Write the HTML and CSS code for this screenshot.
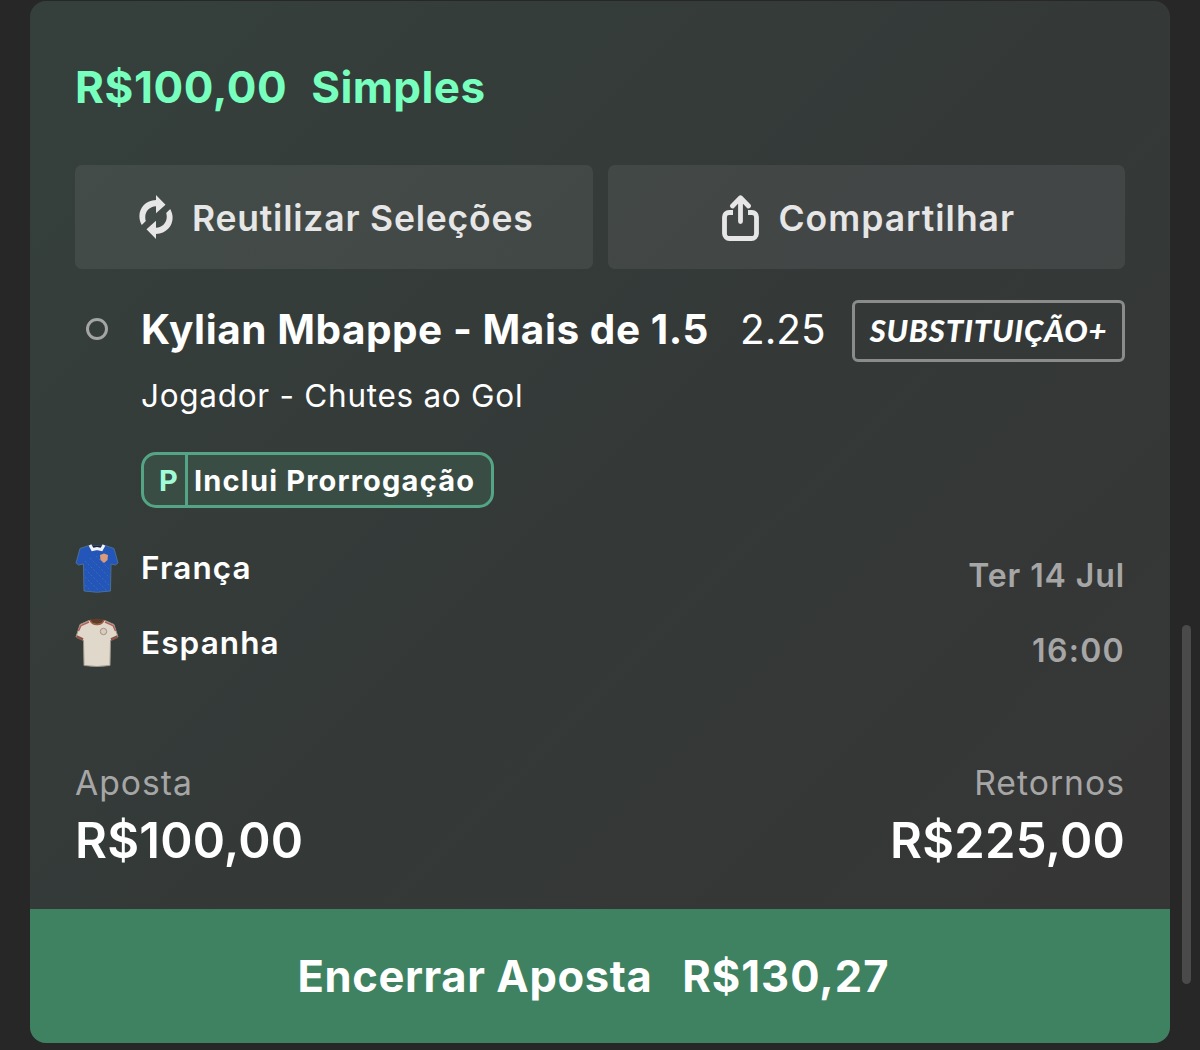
FILE: index.html
```
<!DOCTYPE html>
<html lang="pt-BR">
<head>
    <meta charset="utf-8">
    <title>Minhas Apostas</title>
    <link rel="stylesheet" href="styles.css">
</head>
<body>
    <div class="bet-card">
        <div class="bet-body">
            <div class="bet-header">
                <span class="header-stake">R$100,00</span>
                <span class="header-type">Simples</span>
            </div>

            <div class="actions">
                <button type="button" class="action">
                    <svg class="icon-reuse" width="34" height="44" viewBox="0 0 34 44">
                        <path d="M17 0 L26.500 9.700 L17 18.300 V11.200 C9.500 11.500 4.500 18 6.800 26 L2.800 30 C-3.500 19 3 5.500 17 5 Z"/>
                        <path d="M17 44 L7.500 34.300 L17 25.700 V32.800 C24.500 32.500 29.500 26 27.200 18 L31.200 14 C37.500 25 31 38.500 17 39 Z"/>
                    </svg>
                    <span class="reuse-label">Reutilizar Seleções</span>
                </button>
                <button type="button" class="action">
                    <svg class="icon-share" width="37" height="46" viewBox="0 0 37 46">
                        <path stroke-linecap="butt" d="M11 17.500 H7 a4.500 4.500 0 0 0 -4.500 4.500 V38.500 a5 5 0 0 0 5 5 H29.500 a5 5 0 0 0 5 -5 V22 a4.500 4.500 0 0 0 -4.500 -4.500 H26"/>
                        <path stroke-linecap="round" d="M18.500 26.500 V4 M10.500 11 L18.500 2.700 L26.500 11"/>
                    </svg>
                    <span class="share-label">Compartilhar</span>
                </button>
            </div>

            <div class="selection">
                <span class="status-dot"></span>
                <span class="selection-name">Kylian Mbappe - Mais de 1.5</span>
                <span class="odds">2.25</span>
                <span class="sub-badge">SUBSTITUIÇÃO+</span>
            </div>
            <div class="market">Jogador - Chutes ao Gol</div>
            <div class="pill">
                <span class="pill-letter">P</span>
                <span class="pill-text">Inclui Prorrogação</span>
            </div>

            <div class="fixture">
                <div class="team">
                    <svg class="shirt" width="44" height="50" viewBox="0 0 44 50">
                        <path fill="#2356b8" stroke="#4a6f96" d="M14 2.500 L5 5.500 L1 20 L3.500 22 L8.500 21 L9 48 Q22 50.500 35.500 48 L36 21 L40.500 22 L43 20 L39 5.500 L30 2.500 Z"/>
                        <path fill="none" stroke="#3b69b5" stroke-dasharray="2 2" d="M10 18 L35 43 M10 26 L32 48 M10 34 L24 48 M15 15 L35 35 M21 13 L35 27 M10 42 L16 48"/>
                        <path fill="#17233f" d="M16 2.500 H28 L25 6 H19 Z"/>
                        <path fill="none" stroke="#f2f3f5" stroke-width="3" d="M15 2 L17.500 6.500 L22 5.500 L26.500 6.500 L29 2"/>
                        <path fill="#d99b7c" d="M25 12 L29 10.500 L33 12 L32.500 17 L29 20 L25.500 17 Z"/>
                    </svg>
                    <span class="team-name">França</span>
                    <span class="fixture-info date">Ter 14 Jul</span>
                </div>
                <div class="team">
                    <svg class="shirt" width="44" height="50" viewBox="0 0 44 50">
                        <path fill="#dfd8cb" stroke="#9c9588" d="M14 2.500 L5 6.500 L1 19 L8.500 22.500 L9 47.500 Q22 49.500 35 47.500 L35.500 22.500 L43 19 L39 6.500 L30 2.500 Z"/>
                        <path fill="none" stroke="#b0605b" stroke-width="1.500" d="M14 4 L6 7.500 L3.500 13 M30 4 L38 7.500 L40.500 13"/>
                        <path fill="none" stroke="#8a5548" stroke-width="2.500" d="M1.500 18.500 L8 21.500 M42.500 18.500 L36 21.500"/>
                        <path fill="#5f3d2b" d="M15 1.500 Q22 0 29 1.500 Q28 6 22 6 Q16 6 15 1.500 Z"/>
                        <path fill="none" stroke="#9a5d3e" stroke-width="1.500" d="M15 2 Q16.500 6.500 22 6.500 Q27.500 6.500 29 2"/>
                        <circle cx="28.500" cy="13.500" r="3.200" fill="#d8cdbf" stroke="#a98f84"/>
                    </svg>
                    <span class="team-name">Espanha</span>
                    <span class="fixture-info time">16:00</span>
                </div>
            </div>

            <div class="totals">
                <div class="total">
                    <span class="total-label">Aposta</span>
                    <span class="total-value">R$100,00</span>
                </div>
                <div class="total total-right">
                    <span class="total-label">Retornos</span>
                    <span class="total-value">R$225,00</span>
                </div>
            </div>
        </div>

        <button type="button" class="cash-out">
            <span class="cash-label">Encerrar Aposta</span>
            <span class="cash-value">R$130,27</span>
        </button>
    </div>
    <div class="scroll-thumb"></div>
</body>
</html>
```
FILE: styles.css
```
* {
    box-sizing: border-box;
}

body {
    margin: 0;
    height: 1050px;
    padding: 1px 30px 0;
    overflow: hidden;
    background-color: #272727;
    color: #fff;
    font-family: Inter, "Liberation Sans", sans-serif;
    white-space: nowrap;
}

button {
    border: 0;
    padding: 0;
    color: inherit;
    font-family: inherit;
}

.bet-card {
    display: flex;
    flex-direction: column;
    height: 1042px;
    border-radius: 16px;
    overflow: hidden;
    background: linear-gradient(135deg, #35403c 0%, #343938 50%, #363636 90%);
}

.bet-body {
    flex: 1;
    padding: 56px 45px 0;
}

.bet-header {
    display: flex;
    gap: 24px;
    height: 60px;
    line-height: 60px;
    font-size: 44px;
    font-weight: 650;
    color: #76ffbd;
}

.header-stake {
    letter-spacing: 0.6px;
}

.header-type {
    letter-spacing: 0.4px;
}

.actions {
    display: flex;
    gap: 15px;
    height: 104px;
    margin-top: 48px;
}

.action {
    flex: 1;
    display: flex;
    align-items: center;
    justify-content: center;
    gap: 19px;
    padding-left: 5px;
    border-radius: 7px;
    background-color: rgba(255, 255, 255, 0.07);
    color: #e6e6e6;
    font-size: 35.5px;
    font-weight: 620;
}

.reuse-label {
    margin-top: 2px;
    letter-spacing: 0.8px;
}

.share-label {
    margin-top: 2px;
    letter-spacing: 1px;
}

.icon-reuse {
    fill: #e6e6e6;
}

.icon-share {
    margin-top: 1px;
    fill: none;
    stroke: #e6e6e6;
    stroke-width: 4.8;
    stroke-linejoin: round;
}

.selection {
    display: flex;
    align-items: center;
    height: 62px;
    margin-top: 31px;
}

.status-dot {
    width: 22px;
    height: 22px;
    margin: 0 33px 5px 11px;
    border: 3px solid #a3a6a5;
    border-radius: 50%;
}

.selection-name {
    margin-bottom: 3px;
    font-size: 40.5px;
    font-weight: 700;
    letter-spacing: 0.55px;
}

.odds {
    margin: 0 0 3px 31px;
    font-size: 40.5px;
}

.sub-badge {
    width: 273px;
    height: 62px;
    margin-left: auto;
    border: 3px solid #898c8b;
    border-radius: 6px;
    line-height: 54px;
    text-align: center;
    font-family: Lato, sans-serif;
    font-size: 31px;
    font-weight: 900;
    font-style: italic;
    letter-spacing: 0.8px;
}

.market {
    height: 40px;
    margin: 14px 0 0 66px;
    line-height: 40px;
    font-size: 31.5px;
    letter-spacing: 0.72px;
}

.pill {
    display: flex;
    width: 353px;
    height: 56px;
    margin: 36px 0 0 66px;
    border: 3px solid #54a585;
    border-radius: 15px;
    background-color: #3a4d45;
    line-height: 51px;
    font-size: 29px;
    font-weight: 700;
}

.pill-letter {
    width: 44px;
    padding-left: 15px;
    border-right: 3px solid #54a585;
    color: #a0fbd6;
}

.pill-text {
    padding-left: 6px;
    letter-spacing: 1.2px;
}

.fixture {
    margin-top: 23px;
}

.team {
    display: flex;
    align-items: center;
    height: 75px;
}

.shirt {
    margin-bottom: 1px;
}

.team-name {
    margin: 0 0 2px 22px;
    font-size: 31.5px;
    font-weight: 600;
    letter-spacing: 1.1px;
}

.fixture-info {
    margin: 13px 0 0 auto;
    color: #a6a6a6;
    font-size: 32px;
    font-weight: 600;
}

.date {
    letter-spacing: 0.9px;
}

.time {
    letter-spacing: 1.3px;
}

.totals {
    display: flex;
    justify-content: space-between;
    margin-top: 82px;
}

.total {
    display: flex;
    flex-direction: column;
}

.total-right {
    align-items: flex-end;
}

.total-label {
    line-height: 40px;
    font-size: 33.7px;
    letter-spacing: 1px;
    color: #a6a6a6;
}

.total-value {
    margin-top: 8px;
    line-height: 60px;
    font-size: 49px;
    font-weight: 600;
    letter-spacing: 0.2px;
}

.cash-out {
    display: flex;
    align-items: center;
    justify-content: center;
    gap: 30px;
    height: 134px;
    padding: 0 13px 1px 0;
    background-color: #3e8261;
    font-size: 43.5px;
    font-weight: 650;
}

.cash-label {
    letter-spacing: 0.6px;
}

.cash-value {
    letter-spacing: 1px;
}

.scroll-thumb {
    position: absolute;
    top: 625px;
    right: 9px;
    width: 9px;
    height: 359px;
    border-radius: 5px;
    background-color: #4a4a4a;
}
```
